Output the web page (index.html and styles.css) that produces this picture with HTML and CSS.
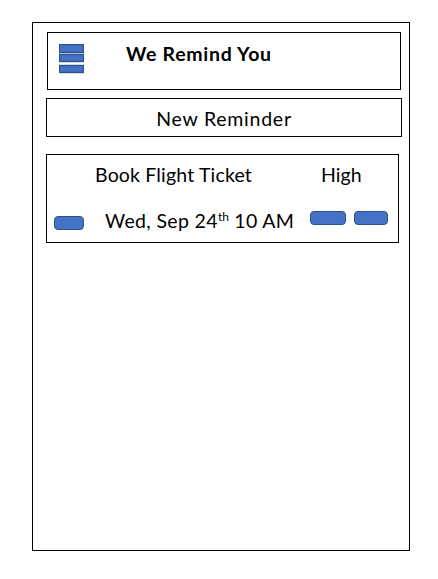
FILE: index.html
```html
<!DOCTYPE html>
<html lang="en">
<head>
<meta charset="utf-8">
<title>We Remind You</title>
<link rel="stylesheet" href="styles.css">
</head>
<body>
<div class="phone">
  <header class="app-header">
    <svg class="menu-icon" width="25" height="30" viewBox="0 0 25 30" aria-hidden="true">
      <rect x="0.5" y="0.5" width="24" height="8" fill="#4472C4" stroke="#2F528F" stroke-width="1.4"/>
      <rect x="0.5" y="10.5" width="24" height="7" fill="#4472C4" stroke="#2F528F" stroke-width="1.4"/>
      <rect x="0.5" y="21.5" width="24" height="7" fill="#4472C4" stroke="#2F528F" stroke-width="1.4"/>
    </svg>
    <h1 class="app-title">We Remind You</h1>
  </header>
  <div class="new-reminder">New Reminder</div>
  <div class="reminder-card">
    <div class="card-title">Book Flight Ticket</div>
    <div class="card-priority">High</div>
    <div class="pill pill-left"></div>
    <div class="card-date">Wed, Sep 24<sup class="ord">th</sup> 10 AM</div>
    <div class="card-actions">
      <div class="pill pill-a"></div>
      <div class="pill pill-b"></div>
    </div>
  </div>
</div>
</body>
</html>
```
FILE: styles.css
```css
html, body {
  margin: 0;
  padding: 0;
  background: #ffffff;
}
body {
  font-family: Lato, "Liberation Sans", sans-serif;
  color: #000;
  font-size: 19.5px;
  letter-spacing: 0.5px;
  line-height: 20px;
}
.phone {
  margin: 22px 0 0 32px;
  width: 376px;
  height: 527px;
  border: 1px solid #000;
  display: flex;
  flex-direction: column;
  align-items: flex-start;
}
.app-header {
  margin: 9px 0 0 14px;
  width: 352px;
  height: 56px;
  border: 1px solid #000;
  display: flex;
  align-items: flex-start;
}
.menu-icon {
  display: block;
  margin: 11px 0 0 11px;
  flex: none;
}
.app-title {
  margin: 11px 0 0 42px;
  font-size: 19.5px;
  line-height: 20px;
  font-weight: 700;
  letter-spacing: 0.7px;
}
.new-reminder {
  margin: 8px 0 0 13px;
  width: 354px;
  height: 27px;
  padding-top: 10px;
  border: 1px solid #000;
  text-align: center;
  letter-spacing: 0.75px;
}
.reminder-card {
  margin: 17px 0 0 13px;
  width: 351px;
  height: 77px;
  padding-top: 10px;
  border: 1px solid #000;
  display: grid;
  grid-template-columns: 48px 215px 1fr;
  grid-template-rows: 20px 20px;
  row-gap: 26px;
  align-items: start;
}
.card-title {
  grid-column: 2;
  grid-row: 1;
  letter-spacing: 0.17px;
}
.card-priority {
  grid-column: 3;
  grid-row: 1;
  padding-left: 11px;
  letter-spacing: 0.1px;
}
.card-date {
  grid-column: 2;
  grid-row: 2;
  padding-left: 10px;
  white-space: nowrap;
  letter-spacing: 0.35px;
}
.ord {
  font-size: 12px;
  line-height: 0;
  vertical-align: 7px;
  letter-spacing: 0;
}
.pill {
  box-sizing: border-box;
  background: #4472C4;
  border: 1.5px solid #2F528F;
  border-radius: 4px;
}
.pill-left {
  grid-column: 1;
  grid-row: 2;
  width: 30px;
  height: 14px;
  margin: 5px 0 0 7px;
}
.card-actions {
  grid-column: 3;
  grid-row: 2;
  display: flex;
  gap: 8px;
  margin-top: 0;
}
.pill-a {
  width: 36px;
  height: 14px;
}
.pill-b {
  width: 34px;
  height: 14px;
}
```
